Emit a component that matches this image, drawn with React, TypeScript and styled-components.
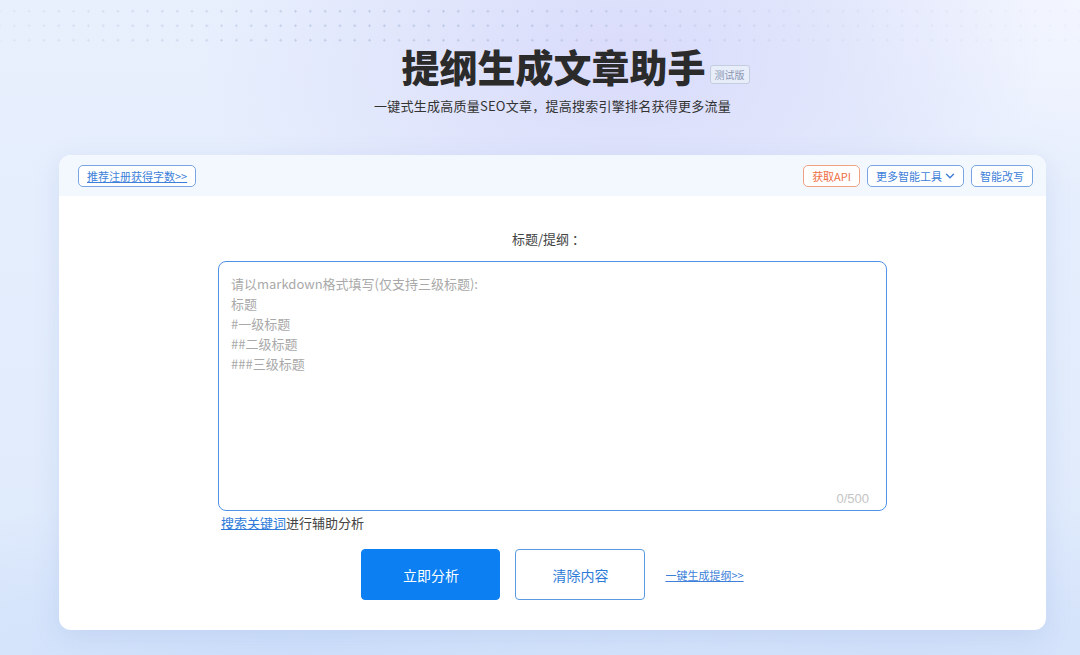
import React from "react"
import styled, { createGlobalStyle } from "styled-components"

const GlobalStyle = createGlobalStyle`
  html, body {
    margin: 0;
    padding: 0;
  }
  body {
    font-family: "Noto Sans CJK SC", "Liberation Sans", sans-serif;
    color: #333;
    background: #e4eefc;
  }
`

const Page = styled.div`
  position: relative;
  width: 1080px;
  height: 655px;
  overflow: hidden;
  box-sizing: border-box;
  padding-left: 25px;
  background:
    radial-gradient(ellipse 420px 260px at 620px 60px, rgba(216, 217, 250, 0.9), rgba(216, 217, 250, 0) 100%),
    radial-gradient(ellipse 300px 200px at 1080px 0px, rgba(244, 246, 255, 0.9), rgba(244, 246, 255, 0) 100%),
    radial-gradient(ellipse 600px 160px at 300px 655px, rgba(200, 220, 250, 0.8), rgba(200, 220, 250, 0) 100%),
    radial-gradient(ellipse 500px 160px at 900px 655px, rgba(205, 222, 250, 0.8), rgba(205, 222, 250, 0) 100%),
    linear-gradient(180deg, #e8f0fd 0%, #e2ecfc 60%, #dde9fb 100%);
`

const Dots = styled.div`
  position: absolute;
  left: 0;
  top: 4px;
  width: 100%;
  height: 44px;
  background-image: radial-gradient(circle, rgba(150, 170, 205, 0.45) 1px, transparent 1.3px);
  background-size: 14.8px 14.5px;
  background-position: 7px 0;
  -webkit-mask-image: linear-gradient(90deg, rgba(0, 0, 0, 0.3) 0%, #000 30%, #000 50%, rgba(0, 0, 0, 0.3) 75%, rgba(0, 0, 0, 0.15) 100%);
  mask-image: linear-gradient(90deg, rgba(0, 0, 0, 0.3) 0%, #000 30%, #000 50%, rgba(0, 0, 0, 0.3) 75%, rgba(0, 0, 0, 0.15) 100%);
`

const Hero = styled.div`
  position: relative;
  display: flex;
  flex-direction: column;
  align-items: center;
  padding-top: 42px;
`

const TitleRow = styled.div`
  display: flex;
  align-items: flex-end;
  margin-left: 46px;
`

const Title = styled.h1`
  margin: 0;
  font-size: 38px;
  line-height: 48px;
  font-weight: 900;
  color: #2b2b2b;
`

const Badge = styled.span`
  margin: 0 0 6px 4px;
  height: 19px;
  padding: 0 4px;
  box-sizing: border-box;
  border: 1px solid #c3cde0;
  border-radius: 3px;
  background: rgba(235, 240, 250, 0.8);
  font-size: 10px;
  line-height: 17px;
  color: #8a97b3;
`

const Subtitle = styled.p`
  margin: 6px 0 0;
  font-size: 13px;
  line-height: 20px;
  letter-spacing: 0.25px;
  color: #333;
`

const Card = styled.div`
  width: 987px;
  margin: 39px auto 0;
  border-radius: 12px;
  background: #fff;
  overflow: hidden;
  box-shadow: 0 6px 24px rgba(120, 150, 210, 0.18);
`

const CardHeader = styled.div`
  height: 41px;
  box-sizing: border-box;
  display: flex;
  align-items: center;
  justify-content: space-between;
  padding: 0 13px 0 19px;
  background: #f3f8fe;
`

const Group = styled.div`
  display: flex;
  align-items: center;
  gap: 7px;
`

const Chip = styled.a<{ $tone?: "blue" | "orange"; $underline?: boolean }>`
  display: inline-flex;
  align-items: center;
  gap: 3px;
  height: 22px;
  box-sizing: border-box;
  padding: 0 8px;
  border: 1px solid ${p => (p.$tone === "orange" ? "#f2a283" : "#78a6e4")};
  border-radius: 5px;
  background: #fff;
  font-size: 11px;
  line-height: 20px;
  color: ${p => (p.$tone === "orange" ? "#ee6d3f" : "#3d7fd9")};
  text-decoration: ${p => (p.$underline ? "underline" : "none")};
  cursor: pointer;
  white-space: nowrap;
`

const CardBody = styled.div`
  display: flex;
  flex-direction: column;
  align-items: center;
  padding: 33px 0 30px;
`

const Label = styled.div`
  font-size: 13px;
  line-height: 20px;
  color: #444;
  margin-left: -8px;
`

const Editor = styled.div`
  position: relative;
  width: 669px;
  height: 250px;
  margin-top: 12px;
`

const TextArea = styled.textarea`
  width: 100%;
  height: 100%;
  box-sizing: border-box;
  resize: none;
  border: 1px solid #4f94e6;
  border-radius: 8px;
  padding: 12px 12px;
  font-family: "Noto Sans CJK SC", "Liberation Sans", sans-serif;
  font-size: 13px;
  line-height: 20px;
  color: #333;
  outline: none;
  &::placeholder {
    color: #a9a9a9;
  }
`

const Counter = styled.span`
  position: absolute;
  right: 18px;
  bottom: 4px;
  font-size: 13px;
  line-height: 16px;
  color: #c4c4c4;
  font-family: "Liberation Sans", sans-serif;
`

const Hint = styled.div`
  width: 669px;
  box-sizing: border-box;
  padding-left: 3px;
  margin-top: 2px;
  font-size: 13px;
  line-height: 20px;
  color: #444;
`

const HintLink = styled.a`
  color: #2d7ad9;
  text-decoration: underline;
  cursor: pointer;
`

const Actions = styled.div`
  display: flex;
  align-items: center;
  margin-top: 16px;
  gap: 15px;
`

const Button = styled.button<{ $primary?: boolean }>`
  width: ${p => (p.$primary ? "139px" : "130px")};
  height: 51px;
  box-sizing: border-box;
  border-radius: 4px;
  border: 1px solid ${p => (p.$primary ? "#0c7ff2" : "#5b9ae2")};
  background: ${p => (p.$primary ? "#0c7ff2" : "#fff")};
  color: ${p => (p.$primary ? "#fff" : "#2f7bd8")};
  font-family: "Noto Sans CJK SC", "Liberation Sans", sans-serif;
  font-size: 14px;
  cursor: pointer;
`

const TextLink = styled.a`
  margin-left: 5px;
  font-size: 11px;
  color: #3d7fd9;
  text-decoration: underline;
  cursor: pointer;
`

const placeholder =
  "请以markdown格式填写(仅支持三级标题):\n标题\n#一级标题\n##二级标题\n###三级标题"

const App = () => {
  return (
    <>
      <GlobalStyle />
      <Page>
        <Dots />
        <Hero>
          <TitleRow>
            <Title>提纲生成文章助手</Title>
            <Badge>测试版</Badge>
          </TitleRow>
          <Subtitle>一键式生成高质量SEO文章，提高搜索引擎排名获得更多流量</Subtitle>
        </Hero>
        <Card>
          <CardHeader>
            <Chip $underline>推荐注册获得字数&gt;&gt;</Chip>
            <Group>
              <Chip $tone="orange">获取API</Chip>
              <Chip>
                更多智能工具
                <svg width="10" height="10" viewBox="0 0 10 10" fill="none">
                  <path d="M1.5 3.2 5 6.7 8.5 3.2" stroke="#3d7fd9" strokeWidth="1.4" strokeLinecap="round" strokeLinejoin="round" />
                </svg>
              </Chip>
              <Chip>智能改写</Chip>
            </Group>
          </CardHeader>
          <CardBody>
            <Label>标题/提纲 ：</Label>
            <Editor>
              <TextArea placeholder={placeholder} />
              <Counter>0/500</Counter>
            </Editor>
            <Hint>
              <HintLink>搜索关键词</HintLink>进行辅助分析
            </Hint>
            <Actions>
              <Button $primary>立即分析</Button>
              <Button>清除内容</Button>
              <TextLink>一键生成提纲&gt;&gt;</TextLink>
            </Actions>
          </CardBody>
        </Card>
      </Page>
    </>
  )
}

export default App
